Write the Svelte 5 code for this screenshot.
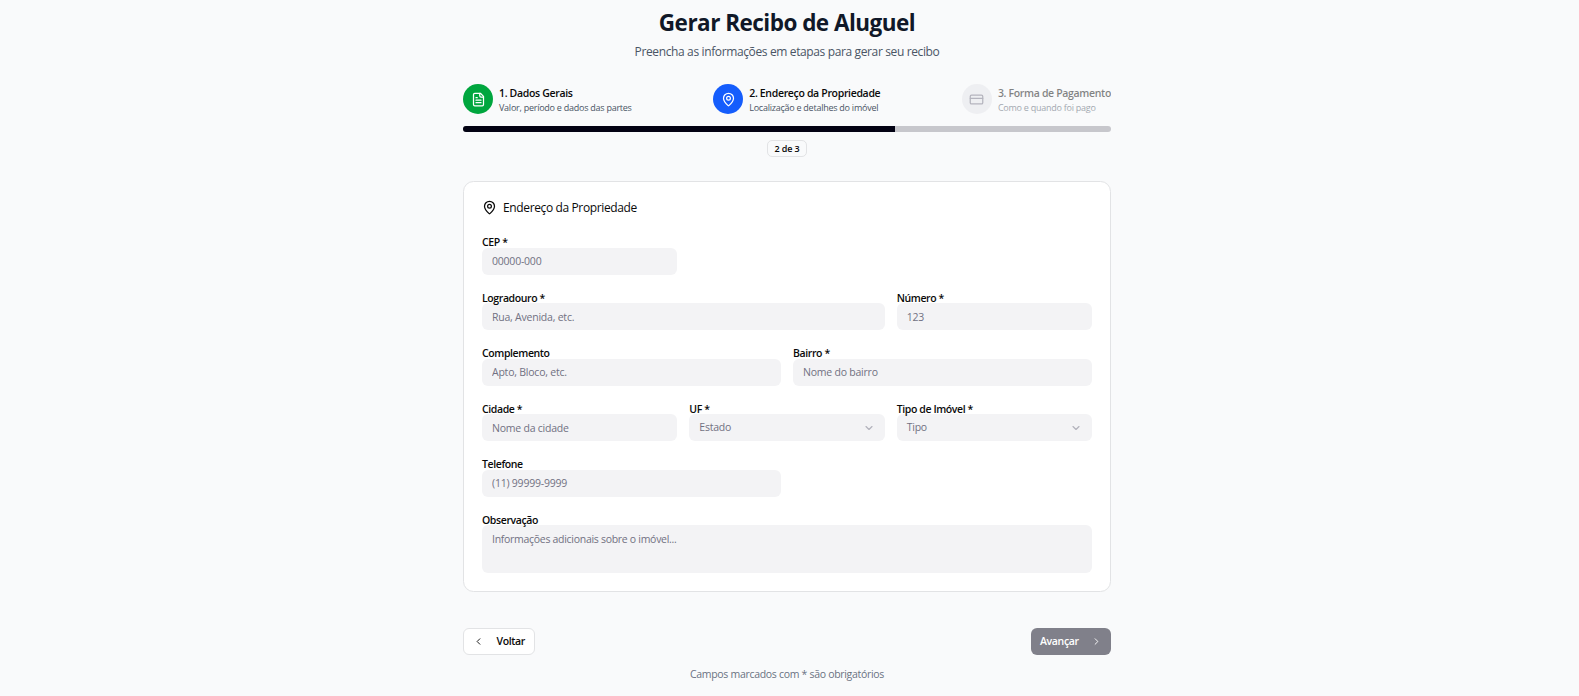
<script>
  const steps = [
    { icon: 'file', state: 'done', title: '1. Dados Gerais', sub: 'Valor, período e dados das partes' },
    { icon: 'pin', state: 'active', title: '2. Endereço da Propriedade', sub: 'Localização e detalhes do imóvel' },
    { icon: 'card', state: 'pending', title: '3. Forma de Pagamento', sub: 'Como e quando foi pago' },
  ];
  const fields = [
    { label: 'CEP *', hint: '00000-000', span: 2, row: true },
    { label: 'Logradouro *', hint: 'Rua, Avenida, etc.', span: 4 },
    { label: 'Número *', hint: '123', span: 2 },
    { label: 'Complemento', hint: 'Apto, Bloco, etc.', span: 3 },
    { label: 'Bairro *', hint: 'Nome do bairro', span: 3 },
    { label: 'Cidade *', hint: 'Nome da cidade', span: 2 },
    { label: 'UF *', hint: 'Estado', span: 2, select: true },
    { label: 'Tipo de Imóvel *', hint: 'Tipo', span: 2, select: true },
    { label: 'Telefone', hint: '(11) 99999-9999', span: 3, row: true },
    { label: 'Observação', hint: 'Informações adicionais sobre o imóvel...', span: 6, area: true },
  ];
</script>

{#snippet icon(name)}
  <svg class="icon {name}" viewBox="0 0 24 24" fill="none" stroke="currentColor" stroke-width="2" stroke-linecap="round" stroke-linejoin="round">
    {#if name === 'file'}
      <path d="M15 2H6a2 2 0 0 0-2 2v16a2 2 0 0 0 2 2h12a2 2 0 0 0 2-2V7Z" />
      <path d="M14 2v4a2 2 0 0 0 2 2h4" />
      <path d="M10 9H8M16 13H8M16 17H8" />
    {:else if name === 'pin'}
      <path d="M20 10c0 4.993-5.539 10.193-7.399 11.799a1 1 0 0 1-1.202 0C9.539 20.193 4 14.993 4 10a8 8 0 0 1 16 0" />
      <circle cx="12" cy="10" r="3" />
    {:else if name === 'card'}
      <rect width="20" height="14" x="2" y="5" rx="2" />
      <path d="M2 10h20" />
    {:else if name === 'down'}
      <path d="m6 9 6 6 6-6" />
    {:else if name === 'left'}
      <path d="m15 18-6-6 6-6" />
    {:else}
      <path d="m9 18 6-6-6-6" />
    {/if}
  </svg>
{/snippet}

<div class="page">
  <main>
    <header>
      <h1>Gerar Recibo de Aluguel</h1>
      <p>Preencha as informações em etapas para gerar seu recibo</p>
    </header>

    <div class="steps">
      {#each steps as s}
        <div class="step {s.state}">
          <span class="dot">{@render icon(s.icon)}</span>
          <div>
            <div class="step-title">{s.title}</div>
            <div class="step-sub">{s.sub}</div>
          </div>
        </div>
      {/each}
    </div>
    <div class="bar"><div class="fill"></div></div>
    <div class="count"><span>2 de 3</span></div>

    <section>
      <h2>{@render icon('pin')}<span>Endereço da Propriedade</span></h2>
      <div class="grid">
        {#each fields as f}
          <div class="field s{f.span}">
            <span class="label">{f.label}</span>
            {#if f.select}
              <button class="box select" type="button"><span>{f.hint}</span>{@render icon('down')}</button>
            {:else if f.area}
              <textarea class="box area" placeholder={f.hint}></textarea>
            {:else}
              <input class="box" placeholder={f.hint} />
            {/if}
          </div>
          {#if f.row}<div class="s{6 - f.span}"></div>{/if}
        {/each}
      </div>
    </section>

    <nav>
      <button class="btn back" type="button">{@render icon('left')}<span>Voltar</span></button>
      <button class="btn next" type="button"><span>Avançar</span>{@render icon('right')}</button>
    </nav>
    <p class="note">Campos marcados com * são obrigatórios</p>
  </main>
</div>

<style>
  :global(body) { margin: 0; background: #f9fafb; overflow: hidden; }
  .page {
    box-sizing: border-box; height: 696px; padding-right: 5px; background: #f9fafb; color: #0a0a0a;
    font-family: "Segoe UI", "Open Sans", "Noto Sans", sans-serif; font-size: 10.5px;
  }
  main { width: 648px; margin: 0 auto; display: flow-root; }
  h1, h2, p { margin: 0; }
  header { text-align: center; }
  h1 { margin-top: 9px; font-size: 22.5px; line-height: 27px; font-weight: 700; color: #101828; letter-spacing: -0.52px; }
  header p { margin-top: 7px; font-size: 12px; line-height: 18px; color: #4a5565; letter-spacing: -0.37px; }
  .icon { display: block; width: 12px; height: 12px; flex: none; }
  .steps { display: flex; justify-content: space-between; margin-top: 23px; }
  .step { display: flex; align-items: center; gap: 6px; white-space: nowrap; }
  .dot { width: 30px; height: 30px; border-radius: 50%; display: flex; align-items: center; justify-content: center; color: #fff; }
  .dot .icon { width: 15px; height: 15px; }
  .done .dot { background: #00a63e; }
  .active .dot { background: #155dfc; }
  .pending .dot { background: #e5e5ea; color: #717182; }
  .pending { opacity: .5; }
  .step-title { padding-top: 2px; font-size: 10.5px; line-height: 15px; font-weight: 600; letter-spacing: -0.33px; }
  .step-sub { font-size: 9px; line-height: 13px; color: #4a5565; letter-spacing: -0.25px; }
  .bar { height: 6px; margin-top: 12px; border-radius: 3px; overflow: hidden; background: #c7c7cc; }
  .fill { width: 66.6667%; height: 6px; background: #030213; }
  .count { display: flex; justify-content: center; margin-top: 8px; }
  .count span {
    box-sizing: border-box; width: 40px; height: 17px; border: 1px solid #e2e3e5; border-radius: 5px;
    text-align: center; font-size: 9px; line-height: 15px; font-weight: 600; letter-spacing: -0.1px;
  }
  section {
    box-sizing: border-box; margin-top: 23.75px; height: 411px; padding: 18px; border: 1px solid #e2e3e5;
    border-radius: 10.5px; background: #fff;
  }
  h2 { display: flex; align-items: center; gap: 6px; height: 15px; font-size: 12px; font-weight: 400; letter-spacing: -0.37px; }
  h2 .icon { width: 15px; height: 15px; }
  .grid { display: grid; grid-template-columns: repeat(6, 1fr); column-gap: 12px; row-gap: 18px; margin-top: 22.5px; }
  .s2 { grid-column: span 2; }
  .s3 { grid-column: span 3; }
  .s4 { grid-column: span 4; }
  .s6 { grid-column: span 6; }
  .field { display: flex; flex-direction: column; min-width: 0; }
  .label { position: relative; z-index: 1; height: 10.5px; line-height: 10.5px; font-weight: 600; letter-spacing: -0.39px; }
  .box {
    box-sizing: border-box; display: block; width: 100%; height: 27px; margin: 0; padding: 0 10px; border: 0;
    border-radius: 6px; background: #f3f3f5; color: #717182; font: inherit; font-size: 10.5px;
    letter-spacing: -0.22px; resize: none; outline: none;
  }
  .box::placeholder { color: #717182; opacity: 1; }
  .area { height: 48px; padding-top: 7px; line-height: 15px; letter-spacing: -0.29px; }
  .select { display: flex; align-items: center; justify-content: space-between; }
  .select span { padding-bottom: 2px; }
  .select .icon { opacity: .5; stroke-width: 2.2; }
  nav { display: flex; justify-content: space-between; margin-top: 36px; }
  .btn {
    box-sizing: border-box; height: 27px; display: flex; align-items: center; border-radius: 6px;
    font: inherit; font-weight: 600; letter-spacing: -0.35px;
  }
  .btn .icon { width: 11px; height: 11px; }
  .back { width: 72px; padding: 0 9px; border: 1px solid #e2e3e5; background: #fff; color: #0a0a0a; justify-content: space-between; }
  .next { width: 80px; padding: 0 9.5px 0 9px; border: 0; background: #80808a; color: #fff; justify-content: space-between; }
  .note { margin-top: 12px; text-align: center; line-height: 15px; color: #6a7282; letter-spacing: -0.3px; }
</style>
